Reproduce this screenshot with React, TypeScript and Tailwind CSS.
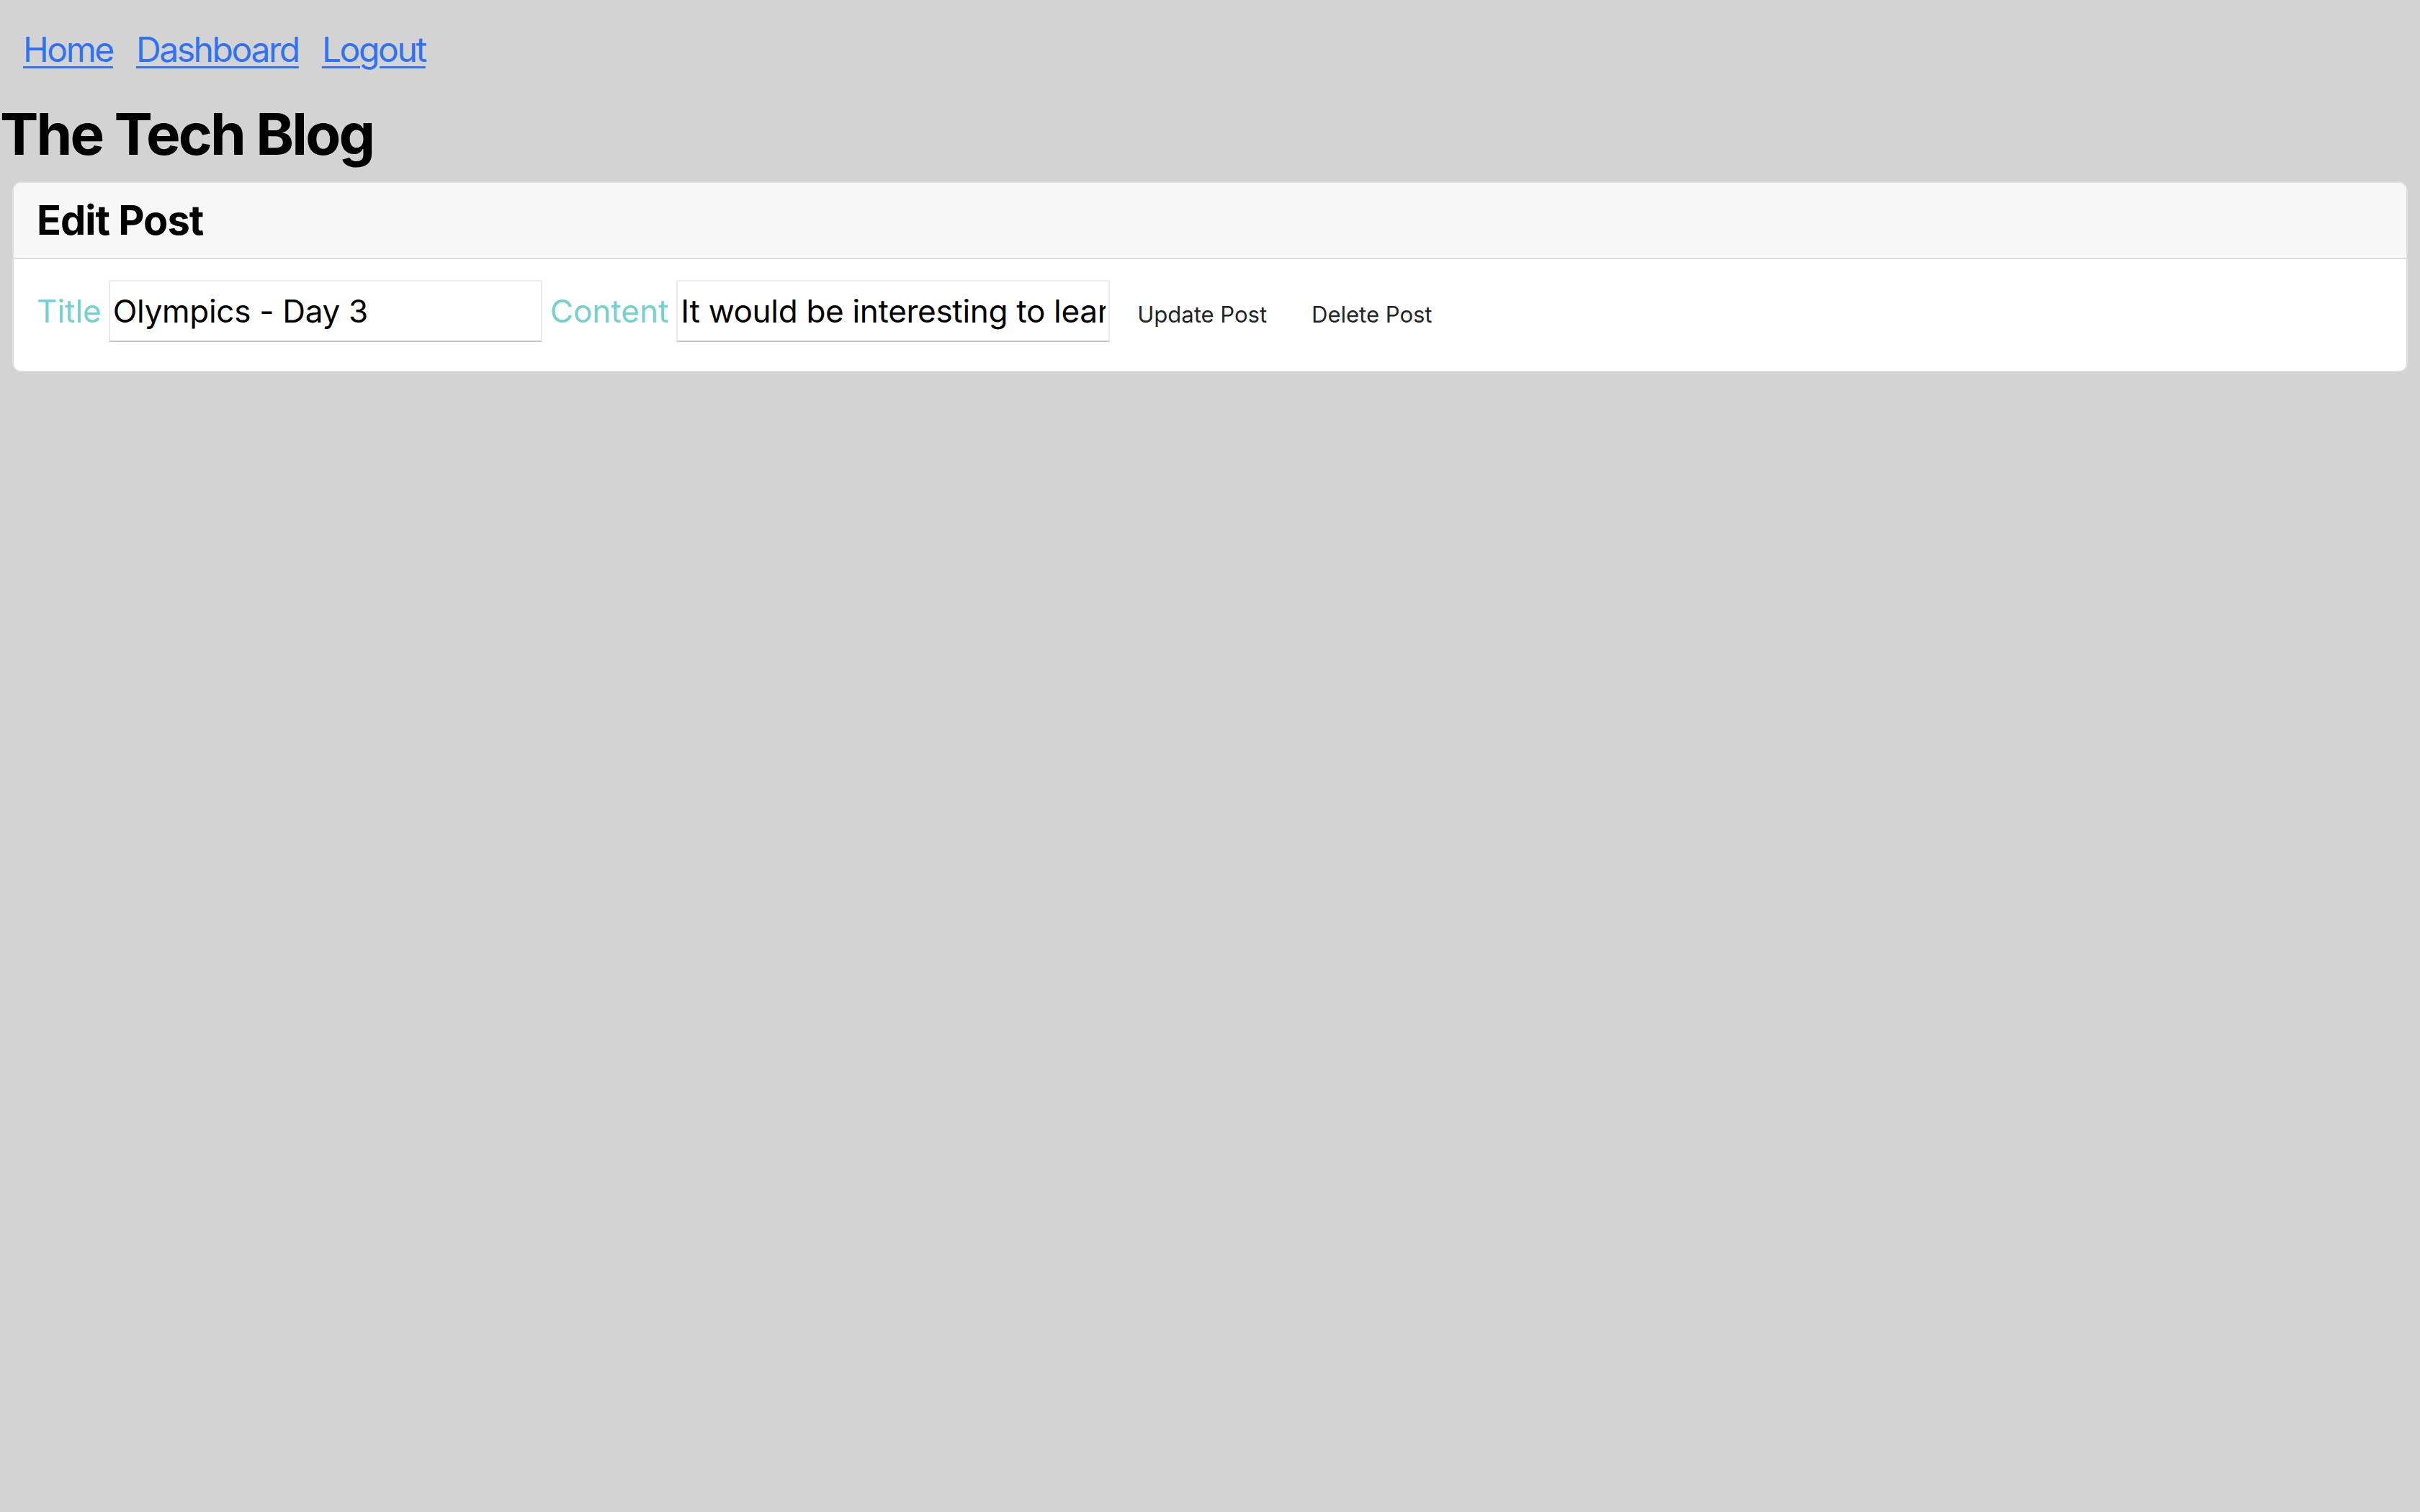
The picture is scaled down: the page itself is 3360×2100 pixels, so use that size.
import { useState, type ChangeEvent } from "react";

const navLinks = ["Home", "Dashboard", "Logout"];

export default function App() {
  const [title, setTitle] = useState("Olympics - Day 3");
  const [content, setContent] = useState(
    "It would be interesting to learn more about the athletes competing today."
  );

  const inputClasses =
    "h-[86px] w-[602px] border-2 border-[#ececec] border-b-[#c6c6c6] bg-white px-[4px] text-[44px] tracking-[-0.3px] text-black outline-none";

  return (
    <div className="min-h-screen bg-[#d3d3d3] font-['Inter','Liberation_Sans',sans-serif] text-black">
      <nav className="flex gap-[32px] px-[32px] py-[33px] text-[48px] leading-[72px] tracking-[-2.4px]">
        {navLinks.map((link) => (
          <a key={link} href="#" className="text-[#2f72f2] underline decoration-[3px] underline-offset-[6px]">
            {link}
          </a>
        ))}
      </nav>

      <h1 className="mb-[18px] text-[80px] font-bold leading-[96px] tracking-[-2.8px]">The Tech Blog</h1>

      <section className="mx-[17px] rounded-[12px] border-2 border-[#dedede] bg-white">
        <header className="rounded-t-[10px] border-b-2 border-[#dcdcdc] bg-[#f7f7f7] px-[32px] py-[16px]">
          <h3 className="text-[56px] font-bold leading-[72px] tracking-[-1px]">Edit Post</h3>
        </header>

        <form className="flex items-center px-[32px] pb-[40px] pt-[29px]" onSubmit={(e) => e.preventDefault()}>
          <label className="mr-[10px] text-[44px] text-[#74d1cd]">Title</label>
          <input
            type="text"
            value={title}
            onChange={(e: ChangeEvent<HTMLInputElement>) => setTitle(e.target.value)}
            className={inputClasses}
          />
          <label className="ml-[11px] mr-[11px] text-[44px] text-[#74d1cd]">Content</label>
          <input
            type="text"
            value={content}
            onChange={(e: ChangeEvent<HTMLInputElement>) => setContent(e.target.value)}
            className={inputClasses}
          />
          <button type="submit" className="ml-[14px] px-[24px] pt-[10px] text-[31px] text-[#212529]">
            Update Post
          </button>
          <button type="button" className="ml-[14px] px-[24px] pt-[10px] text-[31px] text-[#212529]">
            Delete Post
          </button>
        </form>
      </section>
    </div>
  );
}
